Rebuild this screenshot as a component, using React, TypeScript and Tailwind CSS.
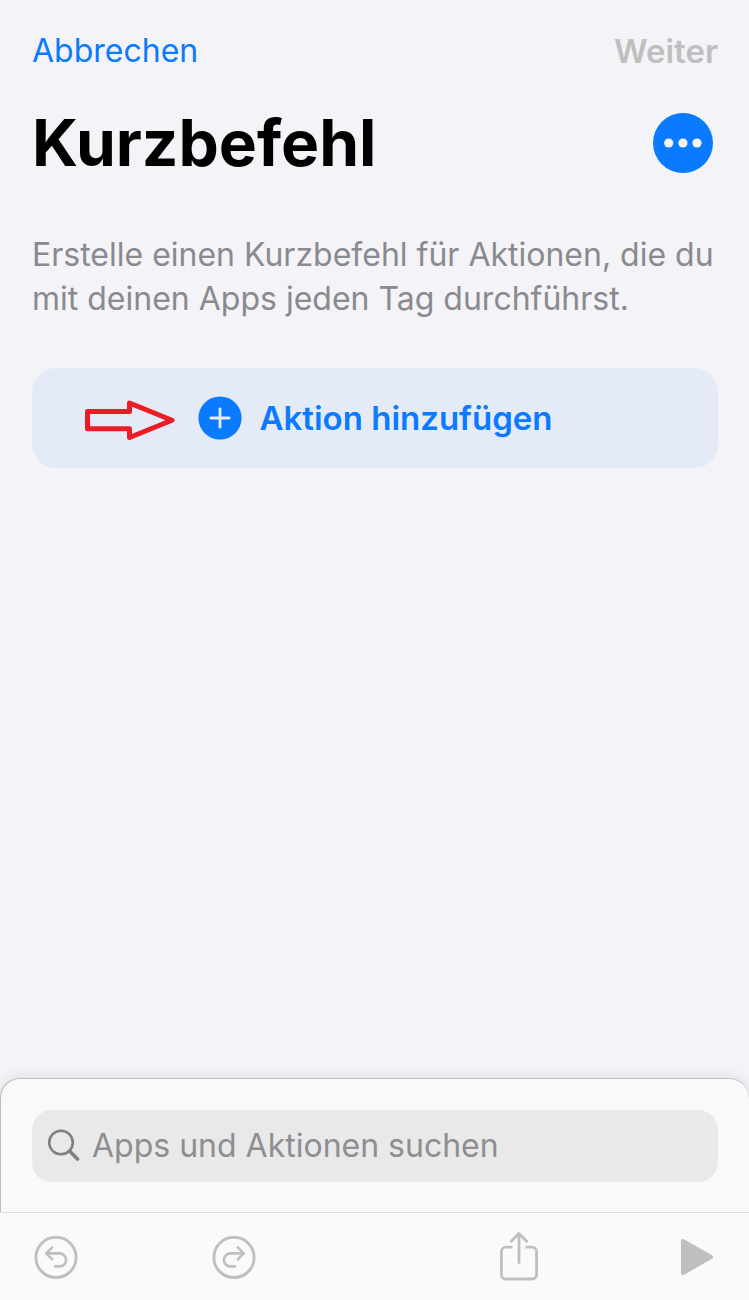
import type { ReactNode } from "react";

type ToolButtonProps = {
  label: string;
  children: ReactNode;
};

function ToolButton({ label, children }: ToolButtonProps) {
  return (
    <button type="button" aria-label={label} className="flex w-11 shrink-0 justify-center text-[#bfbfbf]">
      {children}
    </button>
  );
}

function UndoIcon({ className = "" }: { className?: string }) {
  return (
    <svg width="44" height="44" viewBox="0 0 44 44" fill="none" stroke="currentColor" strokeLinecap="round" strokeLinejoin="round" className={className}>
      <circle cx="22" cy="22.4" r="20.1" strokeWidth="2.9" />
      <path d="M18.2 12.4 12.2 18.4 18.2 24.4M12.2 18.4H25.6a6.5 6.5 0 0 1 0 13H21.2" strokeWidth="2.6" />
    </svg>
  );
}

function ShareIcon() {
  return (
    <svg width="38" height="52" viewBox="0 0 38 52" fill="none" stroke="currentColor" strokeLinecap="round" strokeLinejoin="round">
      <path d="M12.5 16.2H6a4.6 4.6 0 0 0-4.6 4.6V43.4A4.6 4.6 0 0 0 6 48H32a4.6 4.6 0 0 0 4.6-4.6V20.8A4.6 4.6 0 0 0 32 16.2H25.5" strokeWidth="2.8" strokeLinecap="butt" />
      <path d="M11.3 10.2 19 2.6 26.7 10.2M19 2.6V31.5" strokeWidth="2.8" />
    </svg>
  );
}

function ArrowMark() {
  return (
    <svg width="92" height="42" viewBox="0 0 92 42" fill="none" stroke="#ed1c24" strokeWidth="5" strokeLinejoin="round" aria-hidden="true">
      <path d="M3.5 11.5H45.5V3L88 20.2 45.5 37.5V28.8H3.5Z" />
    </svg>
  );
}

export default function App() {
  return (
    <div className="flex min-h-screen flex-col overflow-x-hidden bg-[#f3f3f8] font-['Inter','Liberation_Sans',sans-serif]">
      <header className="flex items-center justify-between pt-[31px] pr-[31px] pl-8 leading-10">
        <button type="button" className="text-[32px] text-[#0a7aff]">Abbrechen</button>
        <button type="button" disabled className="text-[33px] font-semibold text-[#bfbfbf]">Weiter</button>
      </header>

      <main className="flex-1 pr-[31px] pl-8">
        <div className="mt-8 flex items-center justify-between pr-[5px]">
          <h1 className="text-[64px] leading-20 font-bold text-black">Kurzbefehl</h1>
          <button type="button" aria-label="Details" className="shrink-0">
            <svg width="60" height="60" viewBox="0 0 60 60">
              <circle cx="30" cy="30" r="30" fill="#0a7aff" />
              <g fill="#f3f3f8">
                <circle cx="15.7" cy="30" r="4.6" />
                <circle cx="29.9" cy="30" r="4.6" />
                <circle cx="44" cy="30" r="4.6" />
              </g>
            </svg>
          </button>
        </div>

        <p className="mt-[50px] text-[32px] leading-11 text-[#8a8a8e]">
          Erstelle einen Kurzbefehl für Aktionen, die du mit deinen Apps jeden Tag durchführst.
        </p>

        <button type="button" className="relative mt-[47px] flex w-full items-center justify-center gap-[18px] rounded-3xl bg-[#e4eaf6] py-7 text-[33px] leading-11 font-semibold text-[#0a7aff]">
          <span className="absolute top-8 left-13">
            <ArrowMark />
          </span>
          <svg width="44" height="44" viewBox="0 0 44 44" className="shrink-0">
            <circle cx="22" cy="22" r="21.6" fill="#0a7aff" />
            <path d="M12.8 22H31.2M22 12.8V31.2" stroke="#e4eaf6" strokeWidth="2.8" strokeLinecap="round" />
          </svg>
          Aktion hinzufügen
        </button>
      </main>

      <section className="rounded-t-[20px] border-t border-l border-[#bdbdc1] bg-[#f9f9f9] px-[31px] pt-[31px] pb-[30px] shadow-[0_0_16px_rgba(0,0,0,0.1)]">
        <label className="flex h-18 items-center gap-3 rounded-[20px] bg-[#e9e9e9] px-4">
          <svg width="32" height="34" viewBox="0 0 32 34" fill="none" stroke="#808084" className="shrink-0">
            <circle cx="13" cy="13.5" r="11.8" strokeWidth="2.6" />
            <path d="M21.5 22 29.5 30" strokeWidth="3.6" strokeLinecap="round" />
          </svg>
          <input
            type="text"
            aria-label="Apps und Aktionen suchen"
            placeholder="Apps und Aktionen suchen"
            className="h-11 w-full min-w-0 bg-transparent text-[32px] text-black outline-none placeholder:text-[#8e8e92]"
          />
        </label>
      </section>

      <footer className="relative flex h-22 items-center border-t border-[#dcdcdc] bg-[#fafafa] pr-[30px] pl-[34px]">
        <ToolButton label="Widerrufen">
          <UndoIcon />
        </ToolButton>
        <div className="flex-5" />
        <ToolButton label="Wiederholen">
          <UndoIcon className="-scale-x-100" />
        </ToolButton>
        <div className="flex-9" />
        <ToolButton label="Teilen">
          <ShareIcon />
        </ToolButton>
        <div className="flex-5" />
        <ToolButton label="Ausführen">
          <svg width="34" height="38" viewBox="0 0 34 38" fill="currentColor" stroke="currentColor" strokeWidth="4" strokeLinejoin="round">
            <path d="M3 3 31 19 3 35Z" />
          </svg>
        </ToolButton>
      </footer>
    </div>
  );
}
